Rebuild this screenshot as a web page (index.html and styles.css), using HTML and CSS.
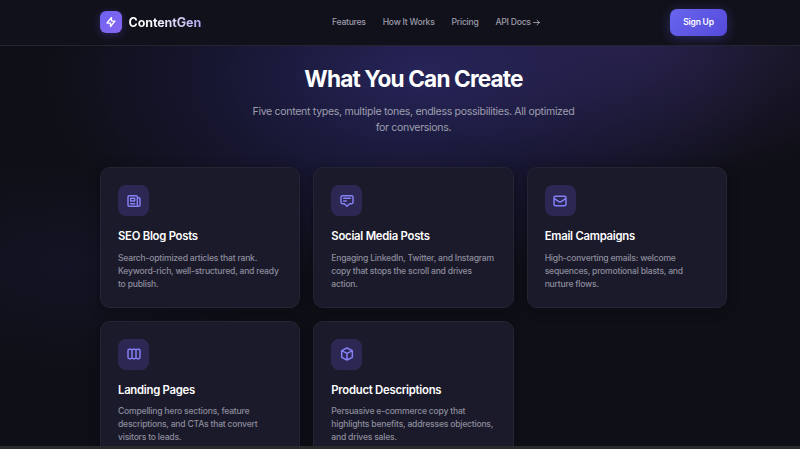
FILE: index.html
```
<!DOCTYPE html>
<html lang="en">
<head>
    <meta charset="UTF-8">
    <meta name="viewport" content="width=device-width, initial-scale=1.0">
    <title>ContentGen</title>
    <link rel="stylesheet" href="styles.css">
</head>
<body>
    <header class="navbar">
        <div class="container nav-inner">
            <a href="#" class="logo">
                <span class="logo-icon">
                    <svg viewBox="0 0 24 24"><path d="M13 10V3L4 14h7v7l9-11h-7z"/></svg>
                </span>
                <span class="logo-text">ContentGen</span>
            </a>
            <nav class="nav-links">
                <a href="#features">Features</a>
                <a href="#how-it-works">How It Works</a>
                <a href="#pricing">Pricing</a>
                <a href="#docs">API Docs <svg class="arrow" viewBox="0 0 12 12"><path d="M1 6h10M6.800 2L11 6l-4.200 4"/></svg></a>
            </nav>
            <a href="#signup" class="btn-signup">Sign Up</a>
        </div>
    </header>

    <main class="container" id="features">
        <div class="section-header">
            <h2>What You Can Create</h2>
            <p>Five content types, multiple tones, endless possibilities. All optimized<br>for conversions.</p>
        </div>

        <div class="card-grid">
            <div class="card">
                <div class="card-icon">
                    <svg viewBox="0 0 24 24"><path d="M19 20H5a2 2 0 01-2-2V6a2 2 0 012-2h10a2 2 0 012 2v1m2 13a2 2 0 01-2-2V7m2 13a2 2 0 002-2V9a2 2 0 00-2-2h-2m-4-3H9M7 16h6M7 8h6v4H7V8z"/></svg>
                </div>
                <h3>SEO Blog Posts</h3>
                <p>Search-optimized articles that rank.<br>Keyword-rich, well-structured, and ready<br>to publish.</p>
            </div>
            <div class="card">
                <div class="card-icon">
                    <svg viewBox="0 0 24 24"><path d="M7 8h10M7 12h4m1 8l-4-4H5a2 2 0 01-2-2V6a2 2 0 012-2h14a2 2 0 012 2v8a2 2 0 01-2 2h-3l-4 4z"/></svg>
                </div>
                <h3>Social Media Posts</h3>
                <p>Engaging LinkedIn, Twitter, and Instagram<br>copy that stops the scroll and drives<br>action.</p>
            </div>
            <div class="card">
                <div class="card-icon">
                    <svg viewBox="0 0 24 24"><path d="M3 8l7.890 5.260a2 2 0 002.220 0L21 8M5 19h14a2 2 0 002-2V7a2 2 0 00-2-2H5a2 2 0 00-2 2v10a2 2 0 002 2z"/></svg>
                </div>
                <h3>Email Campaigns</h3>
                <p>High-converting emails: welcome<br>sequences, promotional blasts, and<br>nurture flows.</p>
            </div>
            <div class="card">
                <div class="card-icon">
                    <svg viewBox="0 0 24 24"><path d="M9 17V7m0 10a2 2 0 01-2 2H5a2 2 0 01-2-2V7a2 2 0 012-2h2a2 2 0 012 2m0 10a2 2 0 002 2h2a2 2 0 002-2M9 7a2 2 0 012-2h2a2 2 0 012 2m0 10V7m0 10a2 2 0 002 2h2a2 2 0 002-2V7a2 2 0 00-2-2h-2a2 2 0 00-2 2"/></svg>
                </div>
                <h3>Landing Pages</h3>
                <p>Compelling hero sections, feature<br>descriptions, and CTAs that convert<br>visitors to leads.</p>
            </div>
            <div class="card">
                <div class="card-icon">
                    <svg viewBox="0 0 24 24"><path d="M20 7l-8-4-8 4m16 0l-8 4m8-4v10l-8 4m0-10L4 7m8 4v10M4 7v10l8 4"/></svg>
                </div>
                <h3>Product Descriptions</h3>
                <p>Persuasive e-commerce copy that<br>highlights benefits, addresses objections,<br>and drives sales.</p>
            </div>
        </div>
    </main>
    <div class="bottom-edge"></div>
</body>
</html>
```

FILE: styles.css
```
* {
    margin: 0;
    padding: 0;
    box-sizing: border-box;
}
body {
    font-family: 'Inter', sans-serif;
    height: 449px;
    overflow: hidden;
    display: flex;
    flex-direction: column;
    color: #fff;
    background:
        radial-gradient(ellipse 360px 210px at 410px 75px, rgba(58, 54, 145, 0.52), rgba(45, 42, 120, 0.26) 55%, transparent),
        radial-gradient(ellipse 270px 150px at 640px 30px, rgba(75, 56, 130, 0.42), transparent),
        radial-gradient(ellipse 200px 100px at 70px 265px, rgba(50, 45, 120, 0.14), transparent),
        #0f0f17;
}
a {
    color: inherit;
    text-decoration: none;
}
svg {
    display: block;
    fill: none;
    stroke: currentColor;
    stroke-width: 2.2;
    stroke-linecap: round;
    stroke-linejoin: round;
}
.container {
    width: 627px;
    margin-left: 100px;
}

/* navbar */
.navbar {
    flex: none;
    height: 46px;
    background: #11111b;
    border-bottom: 1px solid #24232f;
}
.nav-inner {
    display: grid;
    grid-template-columns: 232px 1fr auto;
    align-items: center;
    height: 44px;
}
.logo {
    display: flex;
    align-items: center;
    gap: 6.5px;
}
.logo-icon {
    width: 22px;
    height: 22px;
    display: grid;
    place-items: center;
    border-radius: 6px;
    background: linear-gradient(135deg, #6d62ee, #8767f3);
    box-shadow: 0 2px 9px rgba(99, 91, 241, 0.3);
}
.logo-icon svg {
    width: 12px;
    height: 12px;
    stroke-width: 2.5;
}
.logo-text {
    font-size: 12.5px;
    font-weight: 700;
    letter-spacing: -0.1px;
    background: linear-gradient(90deg, #fff 30%, #b4a8f0);
    -webkit-background-clip: text;
    background-clip: text;
    color: transparent;
}
.nav-links {
    display: flex;
    gap: 17px;
    font-size: 8.6px;
    font-weight: 500;
    letter-spacing: -0.25px;
    color: #9c9ca9;
}
.nav-links a {
    display: flex;
    align-items: center;
    gap: 2px;
    white-space: nowrap;
}
.arrow {
    width: 7px;
    height: 7px;
    stroke-width: 1.6;
}
.btn-signup {
    width: 57px;
    height: 27px;
    display: grid;
    place-items: center;
    border-radius: 7px;
    background: linear-gradient(135deg, #6865ee, #554ada);
    box-shadow: 0 2px 12px rgba(99, 91, 241, 0.35);
    font-size: 8.5px;
    font-weight: 600;
    letter-spacing: -0.2px;
}

/* section title */
.section-header {
    padding-top: 19px;
    height: 121px;
    text-align: center;
}
.section-header h2 {
    font-size: 22.6px;
    line-height: 28px;
    font-weight: 700;
    letter-spacing: -0.85px;
}
.section-header p {
    margin-top: 11px;
    font-size: 10.6px;
    line-height: 16px;
    letter-spacing: -0.33px;
    color: #9d9dad;
}

/* cards */
.card-grid {
    display: grid;
    grid-template-columns: repeat(3, minmax(0, 1fr));
    gap: 13px;
}
.card {
    height: 140.5px;
    padding: 17px;
    border: 1px solid #252433;
    border-radius: 10px;
    background: #1b1a2a;
    box-shadow: 0 3px 12px rgba(5, 5, 12, 0.35);
}
.card-icon {
    width: 31px;
    height: 31px;
    display: grid;
    place-items: center;
    border-radius: 8px;
    background: #2c2753;
    color: #8580f5;
}
.card-icon svg {
    width: 16px;
    height: 16px;
}
.card h3 {
    margin-top: 12px;
    font-size: 11.3px;
    line-height: 16px;
    font-weight: 600;
    letter-spacing: -0.25px;
}
.card p {
    margin-top: 7.5px;
    font-size: 8.6px;
    font-weight: 500;
    line-height: 13px;
    letter-spacing: -0.22px;
    color: #8c8c9c;
    white-space: nowrap;
}

/* strip along the bottom of the window */
.bottom-edge {
    position: fixed;
    left: 0;
    right: 0;
    bottom: 0;
    height: 3px;
    background: #2a2a2d;
}
```
